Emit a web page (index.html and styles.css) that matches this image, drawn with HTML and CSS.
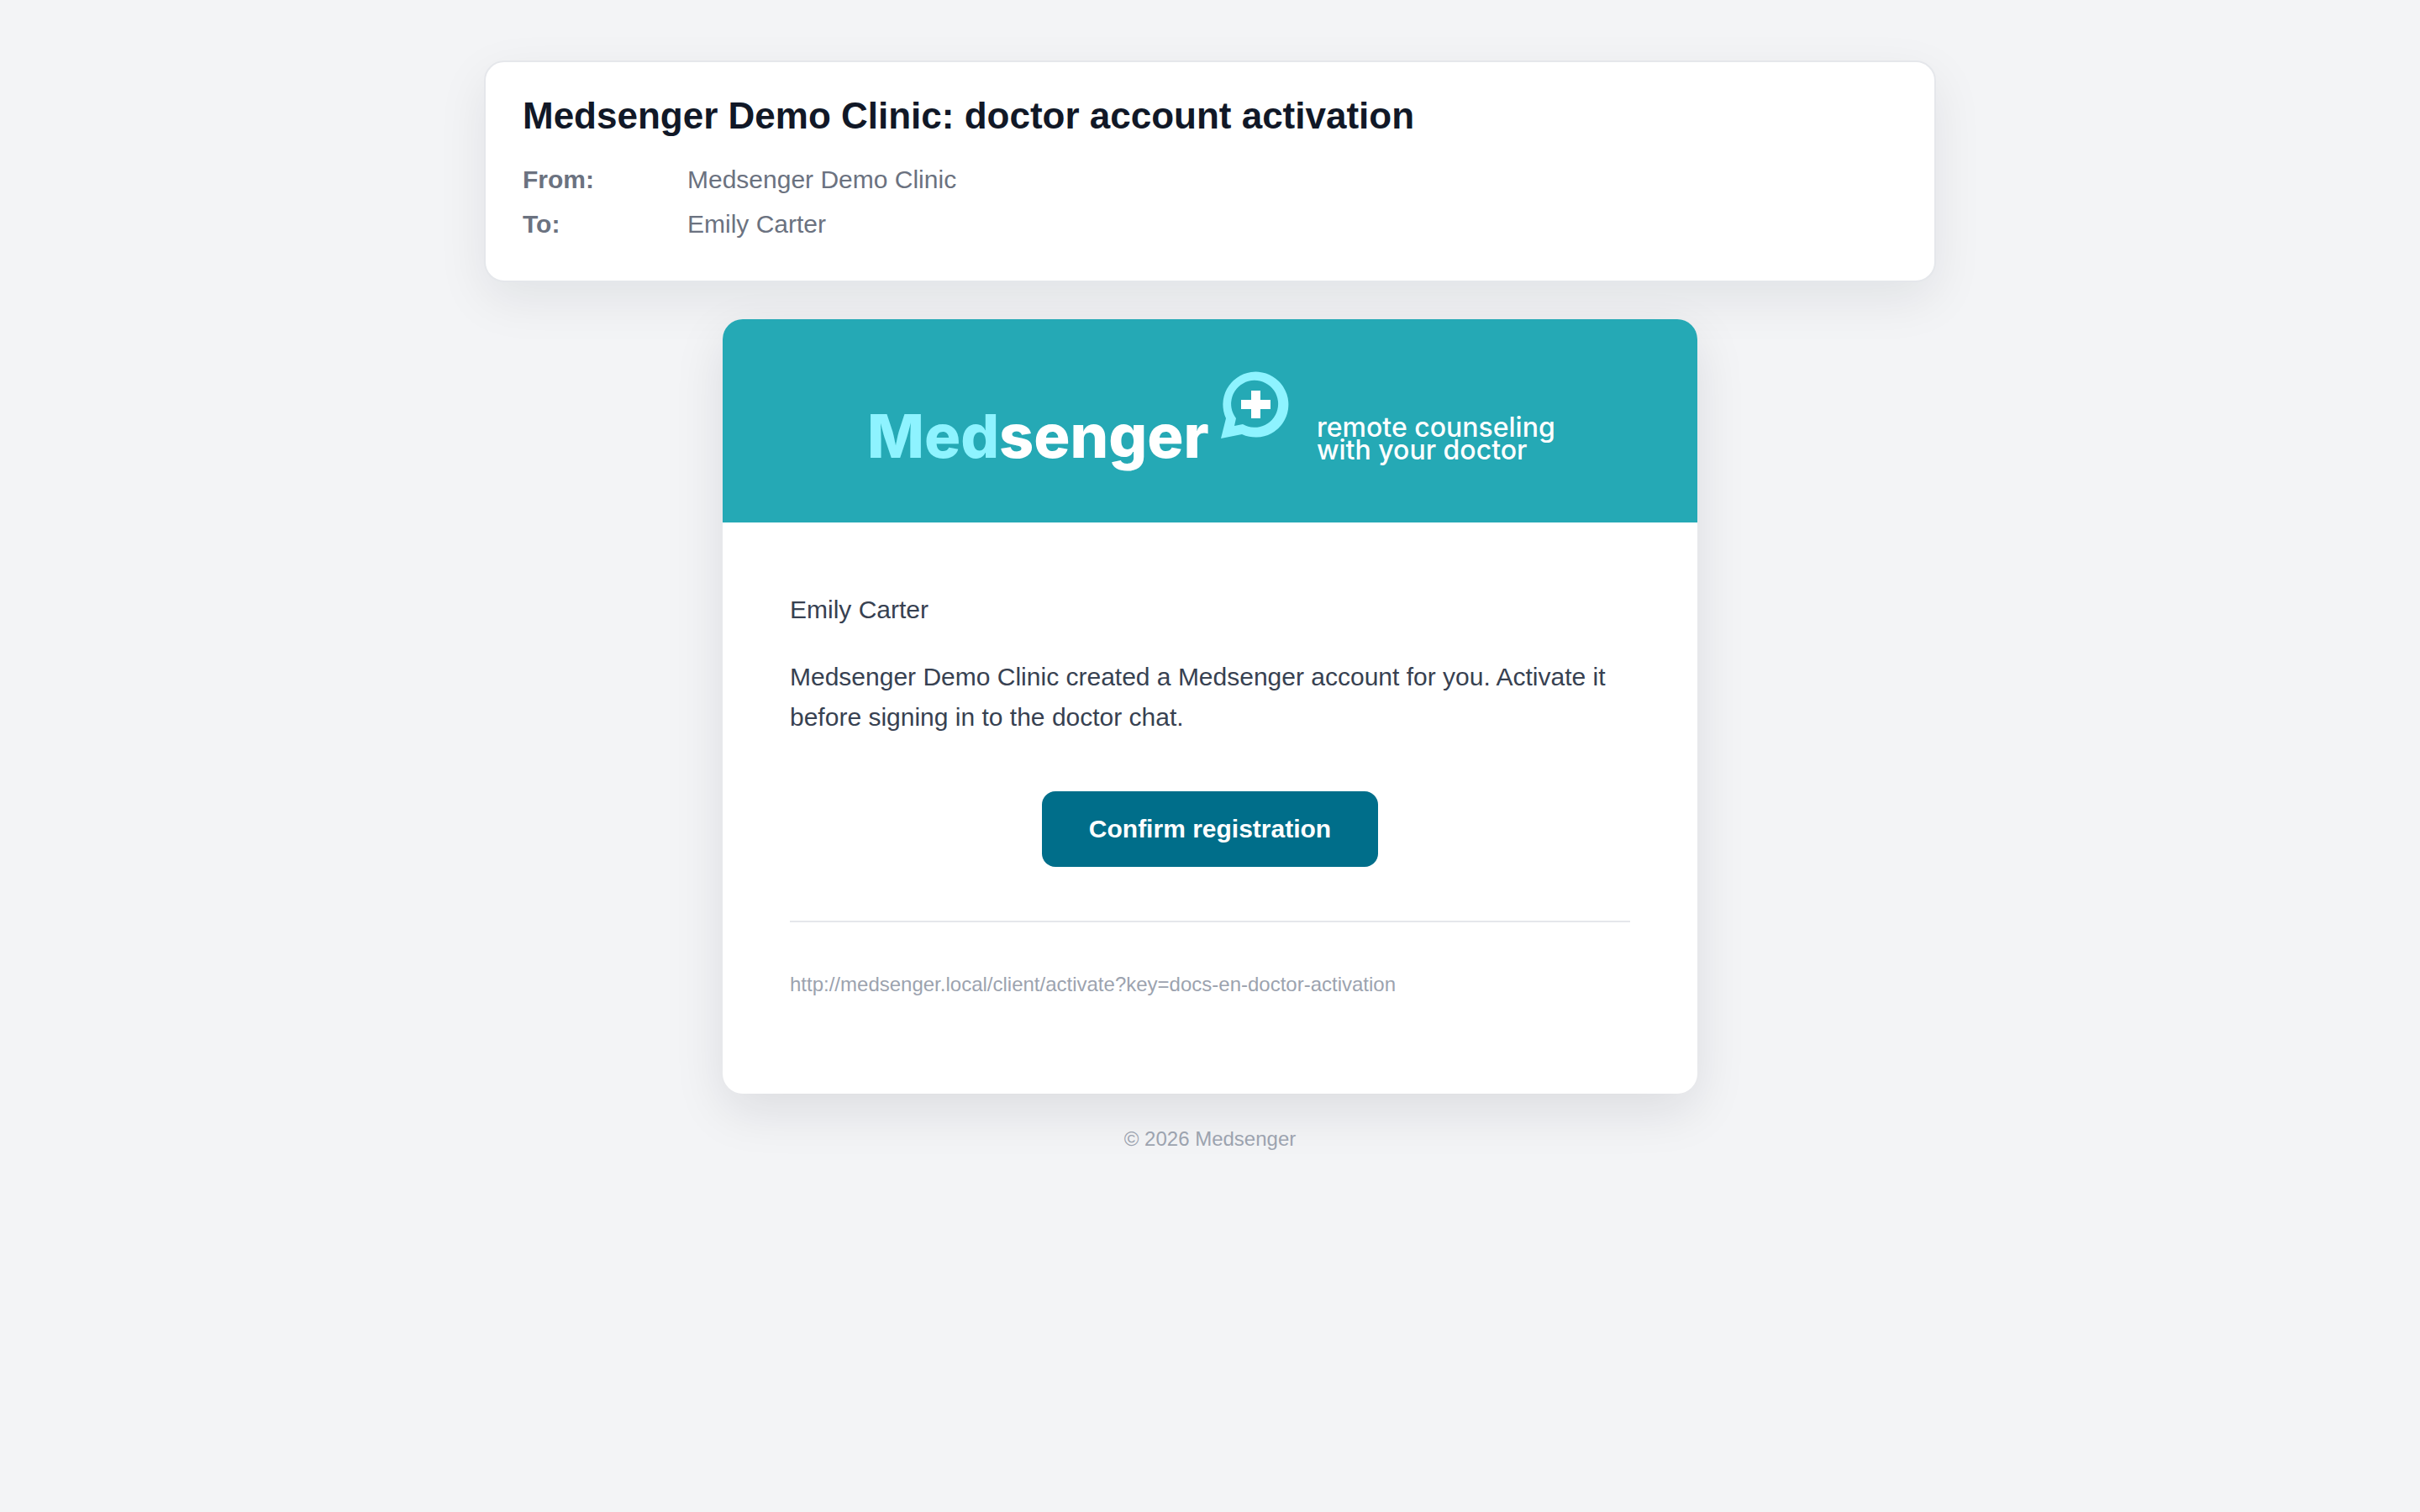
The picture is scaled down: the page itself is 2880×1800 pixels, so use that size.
FILE: index.html
```html
<!DOCTYPE html>
<html lang="en">
<head>
<meta charset="utf-8">
<title>Medsenger Demo Clinic: doctor account activation</title>
<link rel="stylesheet" href="styles.css">
</head>
<body>
<main class="page">
  <section class="mail-head">
    <h1 class="subject">Medsenger Demo Clinic: doctor account activation</h1>
    <div class="meta-row"><span class="meta-label">From:</span><span class="meta-value">Medsenger Demo Clinic</span></div>
    <div class="meta-row"><span class="meta-label">To:</span><span class="meta-value">Emily Carter</span></div>
  </section>
  <article class="letter">
    <header class="banner">
      <div class="logo">
        <div class="wordmark"><span class="wm-light">Med</span>senger</div>
        <svg class="bubble" viewBox="0 0 84 84" aria-hidden="true">
          <path class="bubble-ring" fill-rule="evenodd" d="M1,81 L7,57 A39,39 0 1 1 26,76 Z M19,57 L17,66 L27,64 A28,28 0 1 0 19,57 Z"/>
          <path class="bubble-cross" d="M37,24 H48 V35 H60 V46 H48 V57 H37 V46 H25 V35 H37 Z"/>
        </svg>
        <div class="tagline">remote counseling<br>with your doctor</div>
      </div>
    </header>
    <div class="letter-body">
      <p class="para">Emily Carter</p>
      <p class="para">Medsenger Demo Clinic created a Medsenger account for you. Activate it before signing in to the doctor chat.</p>
      <div class="cta-wrap"><a class="cta" href="#">Confirm registration</a></div>
      <hr class="rule">
      <p class="url">http://medsenger.local/client/activate?key=docs-en-doctor-activation</p>
    </div>
  </article>
  <footer class="copy">© 2026 Medsenger</footer>
</main>
</body>
</html>
```
FILE: styles.css
```css
* { box-sizing: border-box; }
html, body { margin: 0; height: 100%; }
body {
  background: #f3f4f6;
  font-family: "Liberation Sans", Arial, sans-serif;
  color: #374151;
}
.page {
  display: flex;
  flex-direction: column;
  align-items: center;
  padding-top: 72px;
}
.mail-head {
  width: 1728px;
  height: 264px;
  padding: 38px 44px 0;
  background: #fff;
  border: 2px solid #e5e7eb;
  border-radius: 24px;
  box-shadow: 0 20px 60px rgba(17, 24, 39, .08);
  margin-bottom: 44px;
}
.subject {
  margin: 0 0 23px;
  font-size: 44px;
  line-height: 52px;
  font-weight: 700;
  color: #111827;
}
.meta-row {
  display: flex;
  font-size: 30px;
  line-height: 53px;
  color: #6b7280;
}
.meta-label { width: 196px; font-weight: 700; }
.letter {
  width: 1160px;
  background: #fff;
  border-radius: 24px;
  overflow: hidden;
  box-shadow: 0 20px 60px rgba(17, 24, 39, .1);
}
.banner {
  height: 242px;
  background: #25a9b5;
  padding: 63px 0 0 172px;
}
.logo {
  display: flex;
  align-items: flex-start;
}
.wordmark {
  width: 420px;
  margin-top: 40px;
  font-family: Inter, sans-serif;
  font-weight: 800;
  font-size: 72px;
  line-height: 72px;
  color: #fff;
  white-space: nowrap;
}
.wm-light { color: #8ef3ff; }
.bubble { width: 84px; height: 84px; margin-top: -2px; flex: none; }
.bubble-ring { fill: #8ef3ff; }
.bubble-cross { fill: #fff; }
.tagline {
  margin: 52px 0 0 31px;
  font-family: Inter, sans-serif;
  font-weight: 500;
  font-size: 32px;
  line-height: 27px;
  color: #fff;
  white-space: nowrap;
}
.letter-body { padding: 80px 80px 115px; }
.para { margin: 0 0 32px; font-size: 30px; line-height: 48px; }
.cta-wrap { display: flex; justify-content: center; margin-top: 64px; }
.cta {
  width: 400px;
  height: 90px;
  display: flex;
  align-items: center;
  justify-content: center;
  background: #006e8a;
  color: #fff;
  border-radius: 16px;
  font-size: 30px;
  font-weight: 700;
  text-decoration: none;
}
.rule { height: 2px; border: 0; margin: 64px 0 0; background: #e5e7eb; }
.url { margin: 59px 0 0; font-size: 24px; line-height: 30px; color: #9ca3af; }
.copy { margin-top: 39px; font-size: 24px; line-height: 30px; color: #9ca3af; }
```
